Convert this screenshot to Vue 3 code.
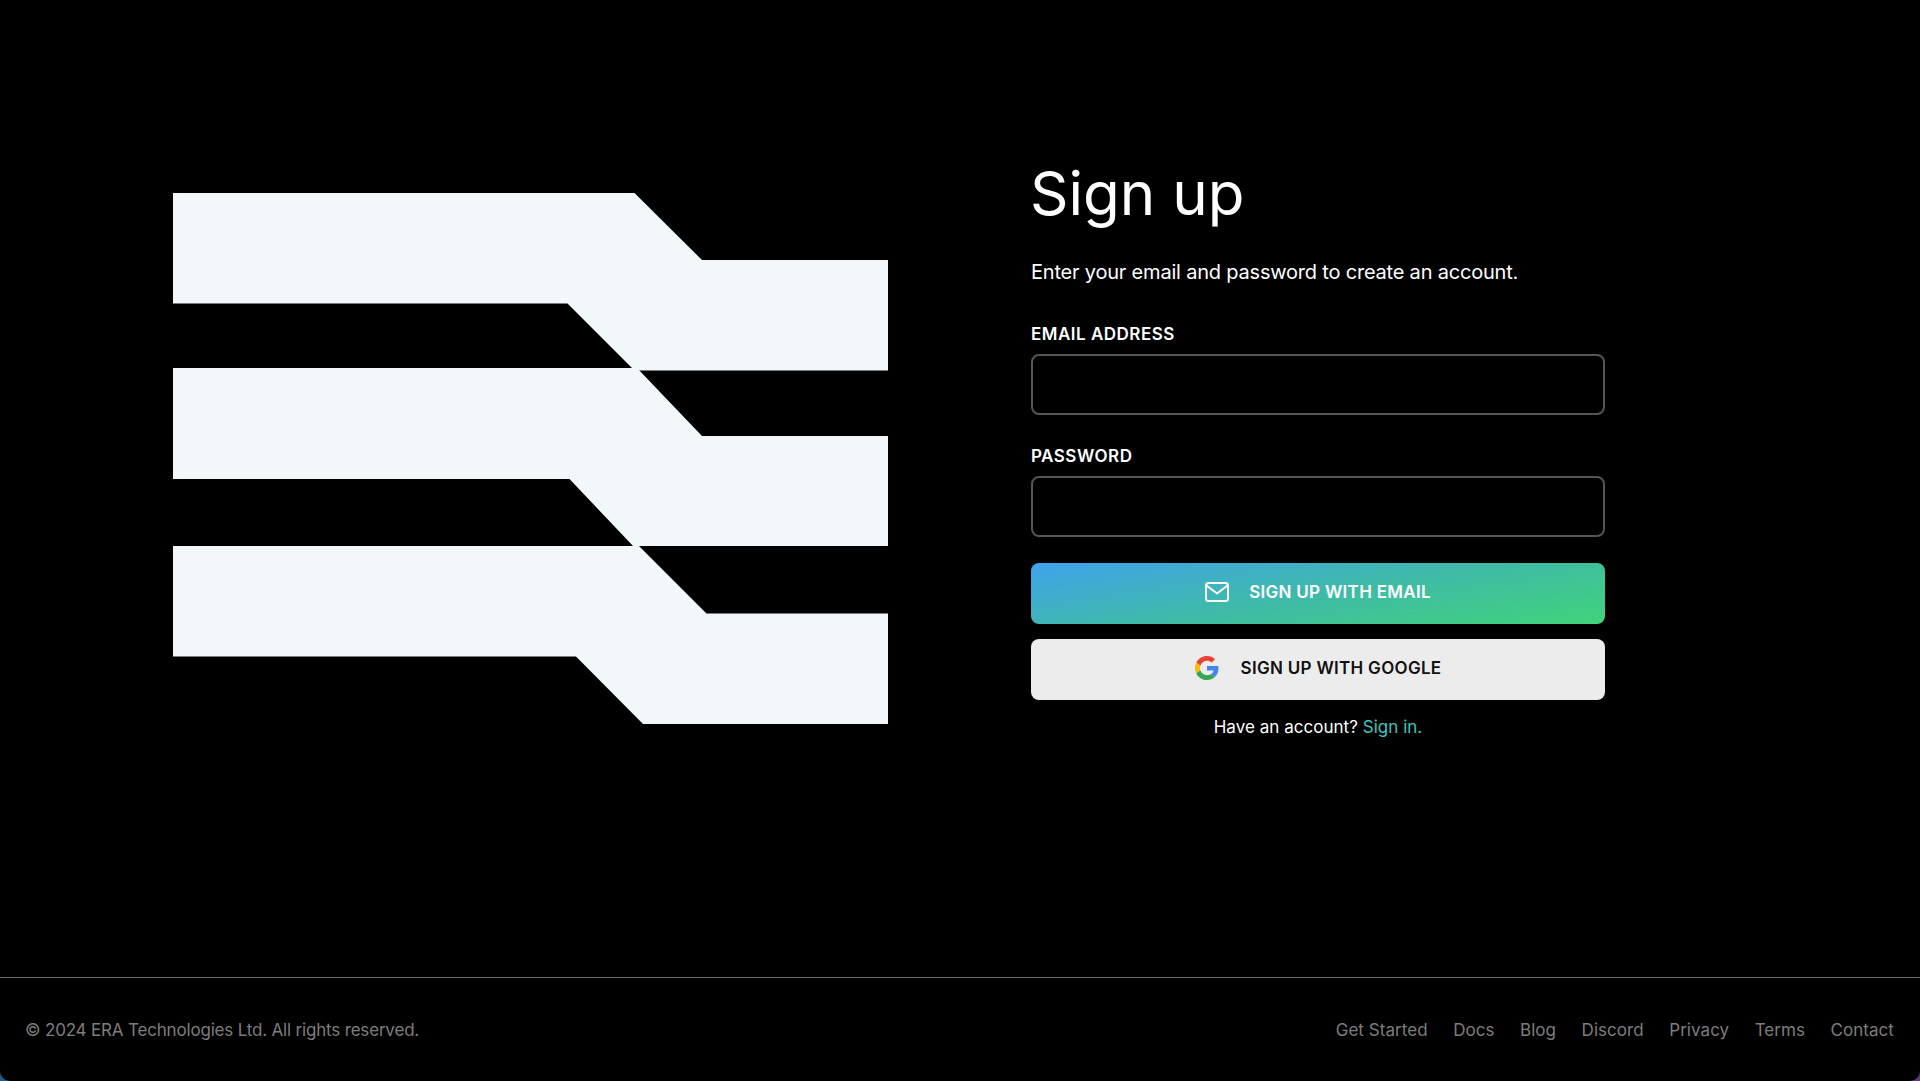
<template>
  <div class="screen">
    <div class="page">
      <main class="main">
        <svg class="logo" width="716" height="532" viewBox="0 0 716 532" aria-hidden="true">
          <polygon v-for="band in bands" :key="band" :points="band" fill="#f2f7fa" />
        </svg>
        <section class="form-side">
          <h1 class="title">Sign up</h1>
          <p class="lead">Enter your email and password to create an account.</p>
          <form class="form" @submit.prevent>
            <label class="field">
              <span class="field-label">EMAIL ADDRESS</span>
              <input class="input" type="email" />
            </label>
            <label class="field">
              <span class="field-label">PASSWORD</span>
              <input class="input" type="password" />
            </label>
            <button class="btn btn-email" type="submit">
              <svg class="btn-icon" width="24" height="20" viewBox="0 0 24 20" fill="none" stroke="currentColor" stroke-width="2" stroke-linejoin="round" stroke-linecap="round">
                <rect x="1" y="1" width="22" height="18" rx="2.5" />
                <path d="M1.5 3.5 12 11.5 22.5 3.5" />
              </svg>
              <span>SIGN UP WITH EMAIL</span>
            </button>
            <button class="btn btn-google" type="button">
              <svg class="btn-icon" width="24" height="24" viewBox="0 0 48 48">
                <path fill="#EA4335" d="M24 9.5c3.54 0 6.71 1.22 9.21 3.6l6.85-6.85C35.9 2.38 30.47 0 24 0 14.62 0 6.51 5.38 2.56 13.22l7.98 6.19C12.43 13.72 17.74 9.5 24 9.5z" />
                <path fill="#4285F4" d="M46.98 24.55c0-1.57-.15-3.09-.38-4.55H24v9.02h12.94c-.58 2.96-2.26 5.48-4.78 7.18l7.73 6c4.51-4.18 7.09-10.36 7.09-17.65z" />
                <path fill="#FBBC05" d="M10.53 28.59c-.48-1.45-.76-2.99-.76-4.59s.27-3.14.76-4.59l-7.98-6.19C.92 16.46 0 20.12 0 24c0 3.88.92 7.54 2.56 10.78l7.97-6.19z" />
                <path fill="#34A853" d="M24 48c6.48 0 11.93-2.13 15.89-5.81l-7.73-6c-2.15 1.45-4.92 2.3-8.16 2.3-6.26 0-11.57-4.22-13.47-9.91l-7.98 6.19C6.51 42.62 14.62 48 24 48z" />
              </svg>
              <span>SIGN UP WITH GOOGLE</span>
            </button>
          </form>
          <p class="signin">Have an account? <a href="#" class="signin-link">Sign in.</a></p>
        </section>
      </main>
      <footer class="footer">
        <span class="copyright">© 2024 ERA Technologies Ltd. All rights reserved.</span>
        <nav class="footer-nav">
          <a v-for="link in links" :key="link" href="#">{{ link }}</a>
        </nav>
      </footer>
    </div>
  </div>
</template>

<script setup>
const bands = [
  '1,0 462.5,0 530,67 716,67 716,177.5 462.5,177.5 395.5,110.5 1,110.5',
  '1,175 465,175 530,243 716,243 716,353 461,353 397.5,286 1,286',
  '1,353 467,353 534.5,420.5 716,420.5 716,531 471,531 404,463.5 1,463.5'
]

const links = ['Get Started', 'Docs', 'Blog', 'Discord', 'Privacy', 'Terms', 'Contact']
</script>

<style scoped>
.screen {
  height: 1081px;
  background: linear-gradient(90deg, #1f5d8c, #5a3a80);
}

.page {
  height: 100%;
  display: flex;
  flex-direction: column;
  border-radius: 0 0 10px 10px;
  background: #000;
  color: #fff;
  font-family: Inter, "Liberation Sans", sans-serif;
}

.main {
  flex: 1;
  display: flex;
  align-items: flex-start;
  gap: 143px;
  padding: 0 0 0 172px;
}

.logo {
  flex: none;
  margin-top: 193px;
}

.form-side {
  width: 574px;
  padding-top: 157px;
}

.title {
  margin: 0 0 0 -1px;
  font-size: 60px;
  line-height: 72px;
  font-weight: 400;
}

.lead {
  margin: 29px 0 0;
  font-size: 20px;
  line-height: 28px;
  letter-spacing: -0.2px;
}

.form {
  display: flex;
  flex-direction: column;
  margin-top: 36px;
}

.field {
  display: flex;
  flex-direction: column;
  gap: 8px;
}

.field + .field {
  margin-top: 29px;
}

.field-label {
  font-size: 17px;
  line-height: 24px;
  font-weight: 600;
  letter-spacing: 0.5px;
}

.input {
  height: 61px;
  box-sizing: border-box;
  background: #000;
  border: 2px solid #555;
  border-radius: 8px;
  color: #fff;
  outline: none;
}

.btn {
  height: 61px;
  display: flex;
  align-items: center;
  justify-content: center;
  gap: 20px;
  padding: 0 0 3px;
  border: 0;
  border-radius: 8px;
  font-family: inherit;
  font-size: 17px;
  font-weight: 600;
  letter-spacing: 0.3px;
}

.btn-email {
  margin-top: 26px;
  color: #fff;
  background: linear-gradient(170deg, #3fa3ec 0%, #3fbaa8 50%, #40d37a 100%);
}

.btn-google {
  gap: 22px;
  margin-top: 15px;
  color: #111;
  background: #ececec;
}

.btn-icon {
  flex: none;
}

.signin {
  margin: 15px 0 0;
  text-align: center;
  font-size: 17px;
  line-height: 24px;
  letter-spacing: 0.03px;
}

.signin-link {
  color: #3cc6c0;
  text-decoration: none;
}

.footer {
  height: 103px;
  display: flex;
  align-items: center;
  justify-content: space-between;
  border-top: 1px solid #6b6b6b;
  padding: 0 26px;
  font-size: 17px;
  color: #7d7d7d;
}

.copyright {
  margin-left: -1px;
  letter-spacing: -0.18px;
}

.footer-nav {
  display: flex;
  gap: 25.5px;
  letter-spacing: 0.05px;
}

.footer-nav a {
  color: inherit;
  text-decoration: none;
}
</style>
